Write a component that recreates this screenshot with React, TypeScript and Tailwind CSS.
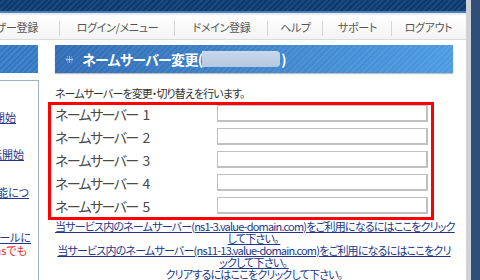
import React from "react";

const font = "font-['Noto_Sans_CJK_JP','Noto_Sans',sans-serif] [font-feature-settings:'palt']";

function NavCell({ w, label, last }: { w: string; label: string; last?: boolean }) {
  return (
    <div className={`${w} h-full flex items-center justify-center relative`}>
      <span className="text-[11px] leading-none text-[#555] whitespace-nowrap tracking-[-0.3px]">{label}</span>
      {!last && <div className="absolute right-0 top-[6px] bottom-[3px] w-px bg-[#d4d4d4]" />}
    </div>
  );
}

function Ornament() {
  return (
    <svg width="7" height="7" viewBox="0 0 7 7" className="shrink-0">
      <rect x="3" y="0" width="1" height="7" fill="#a9c9ef" />
      <rect x="0" y="3" width="7" height="1" fill="#a9c9ef" />
      <rect x="1" y="1" width="5" height="5" fill="none" stroke="#7fb0e6" strokeWidth="1" strokeDasharray="1 1" />
    </svg>
  );
}

const rows = [1, 2, 3, 4, 5];

export default function App() {
  return (
    <div className={`w-[480px] h-[280px] overflow-hidden flex bg-white ${font}`}>
      <div className="w-[466px] flex flex-col shrink-0">
        {/* top band */}
        <div className="h-[12px] bg-[repeating-linear-gradient(135deg,#0d3a6c_0px,#0d3a6c_2px,#184a80_2px,#184a80_4px)]" />
        <div className="h-[2px] bg-[#4d7fb5]" />
        <div className="h-[2px] bg-[#e8ecf0]" />
        {/* nav */}
        <div className="h-[26px] flex bg-[linear-gradient(to_bottom,#ffffff,#f3f3f3)] border-b border-[#dcdcdc]">
          <div className="w-[60px] h-full flex items-center justify-end overflow-hidden relative">
            <span className="text-[11px] leading-none text-[#555] whitespace-nowrap pr-[22px] tracking-[-0.3px]">ユーザー登録</span>
            <div className="absolute right-0 top-[6px] bottom-[3px] w-px bg-[#d4d4d4]" />
          </div>
          <NavCell w="w-[115px]" label="ログイン/メニュー" />
          <NavCell w="w-[93px]" label="ドメイン登録" />
          <NavCell w="w-[55px]" label="ヘルプ" />
          <NavCell w="w-[69px]" label="サポート" />
          <NavCell w="w-[73px]" label="ログアウト" last />
        </div>
        {/* content */}
        <div className="flex pt-[5px] flex-1">
          {/* sidebar */}
          <div className="w-[39px] flex flex-col shrink-0">
            <div className="h-[28px] w-[38px] bg-[repeating-linear-gradient(135deg,#3577c0_0px,#3577c0_2px,#4486cd_2px,#4486cd_4px)]" />
            <div className="mt-[7px] flex-1 border-t border-r border-[#9fb0c8] flex flex-col overflow-hidden text-[11px] leading-[13px]">
              <div className="mt-[30px] flex justify-end pr-[22px] whitespace-nowrap">
                <span className="text-[#23378a] underline">移管開始</span>
              </div>
              <div className="mt-[24px] flex justify-end pr-[14px] whitespace-nowrap">
                <span className="text-[#23378a] underline">移転開始</span>
              </div>
              <div className="mt-[25px] flex justify-end pr-[9px] whitespace-nowrap">
                <span className="text-[#23378a] underline">便利な機能につ</span>
              </div>
              <div className="mt-[32px] flex justify-end pr-[7px] whitespace-nowrap">
                <span className="text-[#23378a] underline">移管のメールに</span>
              </div>
              <div className="flex justify-end pr-[11px] whitespace-nowrap">
                <span className="text-[#e0302a]">他社dnsでも</span>
              </div>
            </div>
          </div>
          {/* main */}
          <div className="ml-[16px] w-[398px] flex flex-col">
            <div className="h-[28px] flex items-center bg-[image:repeating-linear-gradient(135deg,rgba(255,255,255,0.07)_0px,rgba(255,255,255,0.07)_2px,transparent_2px,transparent_4px),linear-gradient(to_right,#2f6cb5,#4b9be2)] shadow-[0_1px_1px_rgba(0,0,0,0.25)]">
              <div className="ml-[11px] mr-[9px]"><Ornament /></div>
              <span className="text-white font-bold text-[14px] leading-none tracking-[-0.7px] whitespace-nowrap">ネームサーバー変更(</span>
              <div className="w-[78px] h-[16px] rounded-r-[4px] bg-[linear-gradient(to_bottom,#c9d8ea,#b4c8e0)]" />
              <span className="text-white font-bold text-[14px] leading-none ml-[1px]">)</span>
            </div>
            <div className="mt-[13px] h-[14px] text-[11px] leading-[14px] text-[#333] tracking-[-0.9px] whitespace-nowrap">
              ネームサーバーを変更・切り替えを行います。
            </div>
            <div className="mt-[2px] -ml-[7px] w-[386px] border-[3px] border-[#ff0000] pl-[4px] pr-[3px] pb-[3px] flex flex-col gap-[6px]">
              {rows.map((n) => (
                <div key={n} className="h-[17px] flex items-center">
                  <div className="w-[162px] flex items-center text-[14px] leading-none text-[#4a4a4a] whitespace-nowrap">
                    <span className="tracking-[-1.6px]">ネームサーバー</span>
                    <span className="ml-[5px]">{n}</span>
                  </div>
                  <div className="w-[212px] h-[17px] border border-[#c0c0c0] border-r-2 border-b-2 bg-white" />
                </div>
              ))}
            </div>
            <div className="text-[11px] leading-[12px] text-[#23378a] text-center whitespace-nowrap tracking-[-0.8px]">
              <div><span className="underline">当サービス内のネームサーバー(ns1-3.value-domain.com)をご利用になるにはここをクリック</span></div>
              <div><span className="underline">して下さい。&nbsp;</span></div>
              <div><span className="underline">当サービス内のネームサーバー(ns11-13.value-domain.com)をご利用になるにはここをクリ</span></div>
              <div><span className="underline">ックして下さい。&nbsp;</span></div>
              <div><span className="underline">クリアするにはここをクリックして下さい。</span></div>
            </div>
          </div>
        </div>
      </div>
      <div className="w-[5px] bg-[#cfd3d8] shrink-0" />
      <div className="flex-1 bg-[#2f4f78]" />
    </div>
  );
}
